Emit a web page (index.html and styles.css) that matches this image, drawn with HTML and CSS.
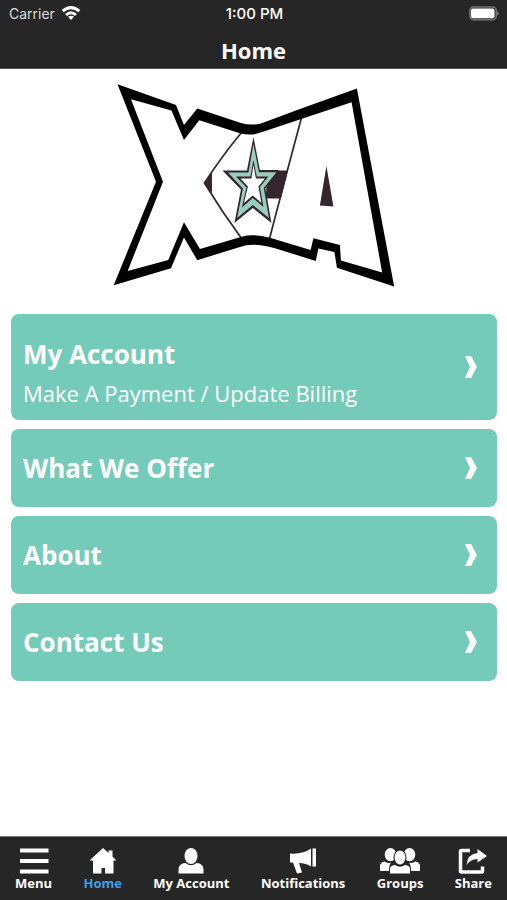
FILE: index.html
```html
<!DOCTYPE html>
<html lang="en">
<head>
<meta charset="utf-8">
<meta name="viewport" content="width=device-width, initial-scale=1">
<title>Home</title>
<link rel="stylesheet" href="styles.css">
</head>
<body>
<header class="top">
  <div class="status">
    <div class="carrier">
      <span>Carrier</span>
      <svg class="wifi" width="20" height="16" viewBox="0 0 20 16" fill="none" stroke="#fff" stroke-width="3"><path d="M1.700 5.200Q10 -2 18.300 5.200"/><path d="M5 9Q10 4.500 15 9"/><path d="M7 10.800Q10 8.500 13 10.800L10 14Z" fill="#fff" stroke="none"/></svg>
    </div>
    <time>1:00 PM</time>
    <svg class="battery" width="32" height="16" viewBox="0 0 32 16"><rect x="1.800" y="1" width="26.500" height="12.800" rx="4" fill="none" stroke="#737373" stroke-width="1.600"/><rect x="3" y="2.500" width="23.500" height="9.800" rx="2" fill="#fff"/><path d="M29.300 5.200Q32.500 7.500 29.300 9.700Z" fill="#808080"/></svg>
  </div>
  <h1>Home</h1>
</header>
<main>
  <svg class="logo" viewBox="113 84 282 204" role="img" aria-label="XA star logo">
    <g fill="#35252c">
      <path d="M204 183L212 172V194Z"/>
      <path d="M267 170.500H288L281 198.500H266Z"/>
      <path d="M326.500 166L333.500 206.500L320 205.500Z"/>
    </g>
    <path d="M242 132Q222 156 204.500 183Q222 212 242 239M301.500 118L286.500 174L269.500 239" fill="none" stroke="#35252c" stroke-width="1.700"/>
    <path d="M253.500 137L260 170H279L265.500 188.500L271.500 223L252.800 208L234.500 223L241 189.500L222.500 170.500H247Z" fill="#35252c"/>
    <path d="M253.500 144L259 172.200H276.500L263.800 188L269 218L252.800 205L237.200 218L243 188.500L228 172.500H248.500Z" fill="#98cebf"/>
    <path d="M253.500 160L256.800 176.500H268.500L260 187L263.500 207L252.800 198L242 207.500L246.500 187.500L236 176.500H250.500Z" fill="#35252c"/>
    <path d="M253.500 165L256 178.500H265L258.500 186.500L261.500 203L252.800 195.500L244 203L248 186.500L240.500 178.500H251.500Z" fill="#fff"/>
    <path fill-rule="evenodd" d="M117.500 84.300L176 105L184 125L197.300 108.500L241 123Q251 126 261 123.500L300 109L357 88.500L394.300 286.500L337 267.800L334.500 252L318.500 248.500L315.800 261L275 248.300Q253 242 240 247L197.300 260.300L184 237.500L171 268.300L113.700 285.300L156 181.700ZM131 99.300L163 181.700L127.700 271L168.300 260L184 222.300L200 249L241.700 236.700Q254 233.500 270 237.700L310.700 250L313.500 238.300L340 245L341 260.700L382.300 272.700L351.700 102.300L260 132.800Q251 136 240 133.300L199.300 120.300L184 140L171.500 110.500Z"/>
  </svg>
  <nav class="cards" aria-label="Sections">
    <a class="card" href="#account"><span class="text detailed"><strong>My Account</strong><span class="sub">Make A Payment / Update Billing</span></span><svg class="chevron" viewBox="0 0 12 22"><path d="M0 0H6L12 11L6 22H0L5 11Z"/></svg></a>
    <a class="card" href="#offer"><span class="text"><strong>What We Offer</strong></span><svg class="chevron" viewBox="0 0 12 22"><path d="M0 0H6L12 11L6 22H0L5 11Z"/></svg></a>
    <a class="card" href="#about"><span class="text"><strong>About</strong></span><svg class="chevron" viewBox="0 0 12 22"><path d="M0 0H6L12 11L6 22H0L5 11Z"/></svg></a>
    <a class="card" href="#contact"><span class="text"><strong>Contact Us</strong></span><svg class="chevron" viewBox="0 0 12 22"><path d="M0 0H6L12 11L6 22H0L5 11Z"/></svg></a>
  </nav>
</main>
<nav class="tabs" aria-label="Main">
  <button class="tab" type="button"><svg width="30" height="26" viewBox="0 0 30 26"><path d="M1 .5H29.500V4.500H1ZM1 11H29.500V15H1ZM1 21.500H29.500V25.500H1Z"/></svg><span>Menu</span></button>
  <a class="tab active" href="#home"><svg width="26" height="26" viewBox="0 0 26 26"><path d="M13 0L18.500 5V2.500H22.500V8.500L26 12V12.500H23.500V25.500H15V20H11.500V25.500H3V12.500H0V12Z"/></svg><span>Home</span></a>
  <a class="tab" href="#account"><svg width="26" height="26" viewBox="0 0 26 26"><ellipse cx="13" cy="8" rx="6.500" ry="8"/><path d="M.5 25.500V21.500Q.5 15.500 7.500 15Q13 19.500 18.500 15Q25.500 15.500 25.500 21.500V25.500Z"/></svg><span>My Account</span></a>
  <a class="tab" href="#notifications"><svg width="28" height="26" viewBox="0 0 28 26"><path d="M1 5.500Q14 6.500 22 .5V18.500Q17 15 10 15L13 24.500L8 25.500L4 14.500H1ZM23.500 .5H27V18.500H23.500Z"/></svg><span>Notifications</span></a>
  <a class="tab" href="#groups"><svg width="40" height="26" viewBox="0 0 40 26"><path d="M0 23V18Q0 14 5 13.500Q8 16 11 14.500Q9 17 9 23ZM40 23V18Q40 14 35 13.500Q32 16 29 14.500Q31 17 31 23ZM10 25.500V21Q10 17.500 15 17Q20 20.500 25 17Q30 17.500 30 21V25.500Z"/><ellipse cx="10.500" cy="6.700" rx="5.800" ry="6.600"/><ellipse cx="29.500" cy="6.700" rx="5.800" ry="6.600"/><ellipse cx="20" cy="9.500" rx="6.500" ry="8" fill="#262626"/><ellipse cx="20" cy="9.500" rx="5.400" ry="6.900"/></svg><span>Groups</span></a>
  <button class="tab" type="button"><svg width="30" height="26" viewBox="0 0 30 26"><path d="M12 2.500H3.500Q2.500 2.500 2.500 3.500V23Q2.500 24 3.500 24H23.500Q24.500 24 24.500 23V18.500" fill="none" stroke="#fff" stroke-width="3.500"/><path d="M19.500 1L29 8L19.500 14.500V11Q12 11 8.500 17.500Q9 6 19.500 5Z"/></svg><span>Share</span></button>
</nav>
</body>
</html>
```

FILE: styles.css
```css
* { box-sizing: border-box; }

body {
  margin: 0;
  min-height: 100vh;
  display: flex;
  flex-direction: column;
  background: #fff;
  color: #fff;
  font-family: "Open Sans", sans-serif;
}

a { color: inherit; text-decoration: none; }

.top {
  background: #262626;
  border-bottom: 1px solid #555;
}

.status {
  display: grid;
  grid-template-columns: 1fr auto 1fr;
  align-items: center;
  height: 28px;
  padding: 0 7px 0 9px;
  font: 14px/20px Inter, sans-serif;
}

.status time { font-size: 15px; font-weight: 500; }
.carrier { display: flex; align-items: center; gap: 6px; color: #ddd; }
.battery { justify-self: end; }

h1 {
  margin: 0;
  padding-top: 4px;
  font-size: 22px;
  line-height: 36px;
  font-weight: 700;
  text-align: center;
}

main { flex: 1; padding: 15px 10px 0 11px; }

.logo {
  display: block;
  width: 58%;
  margin: 0 auto 26px;
}

.cards { display: flex; flex-direction: column; gap: 9px; }

.card {
  display: flex;
  align-items: center;
  justify-content: space-between;
  min-height: 78px;
  padding: 8px 20px 8px 12px;
  border-radius: 8px;
  background: #75cbba;
}

.text { display: flex; flex-direction: column; }
.detailed { padding-top: 12px; }
.card strong { font-size: 26px; line-height: 40px; }
.sub { font-size: 22px; line-height: 38px; }
.chevron { width: 12px; height: 22px; fill: #fff; }

.tabs {
  display: flex;
  justify-content: space-between;
  padding: 11px 15px 8px;
  background: #262626;
  border-top: 1px solid #777;
}

.tab {
  display: flex;
  flex-direction: column;
  align-items: center;
  padding: 0;
  border: 0;
  background: none;
  color: #fff;
  font: 700 13px/18px "Open Sans", sans-serif;
}

.tab svg { fill: #fff; }
.active { color: #3f9fe0; }
```
